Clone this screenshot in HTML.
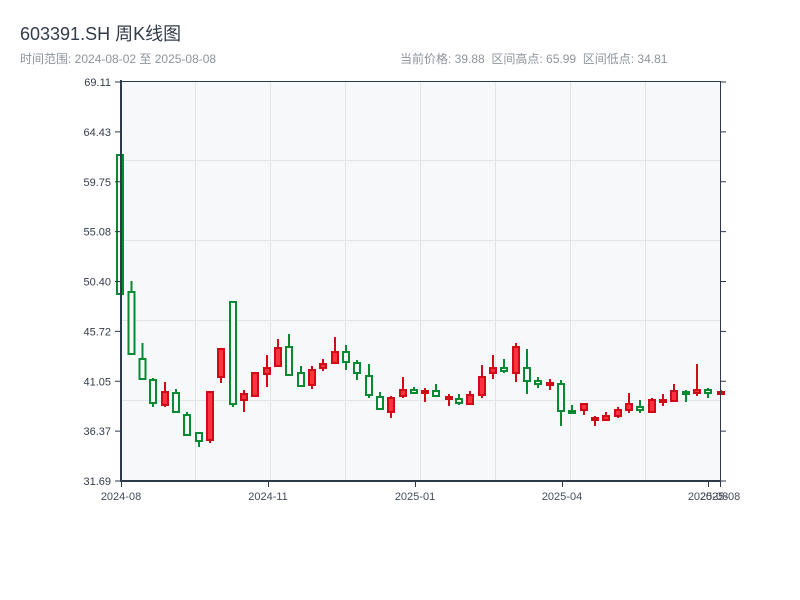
<!DOCTYPE html>
<html><head><meta charset="utf-8"><style>
html,body{margin:0;padding:0;background:#fff;width:800px;height:600px;overflow:hidden}
svg{display:block}
text{font-family:"Liberation Sans","Noto Sans CJK SC",sans-serif;white-space:pre}
</style></head><body>
<svg width="800" height="600" xmlns="http://www.w3.org/2000/svg" xml:space="preserve">
<text x="20" y="40" font-size="18" fill="#333c4a">603391.SH 周K线图</text>
<text x="20" y="63" font-size="12" fill="#8e949c">时间范围: 2024-08-02 至 2025-08-08</text>
<text x="400" y="63" font-size="12" fill="#8e949c">当前价格: 39.88  区间高点: 65.99  区间低点: 34.81</text>
<rect x="121" y="81" width="599" height="400" fill="#f6f8fa"/>
<g stroke="#e1e4e8" stroke-width="1">
<line x1="121" y1="160.5" x2="720" y2="160.5"/><line x1="121" y1="240.5" x2="720" y2="240.5"/><line x1="121" y1="320.5" x2="720" y2="320.5"/><line x1="121" y1="400.5" x2="720" y2="400.5"/>
<line x1="195.5" y1="81" x2="195.5" y2="481"/><line x1="270.5" y1="81" x2="270.5" y2="481"/><line x1="345.5" y1="81" x2="345.5" y2="481"/><line x1="420.5" y1="81" x2="420.5" y2="481"/><line x1="495.5" y1="81" x2="495.5" y2="481"/><line x1="570.5" y1="81" x2="570.5" y2="481"/><line x1="645.5" y1="81" x2="645.5" y2="481"/>
</g>
<g id="c"></g>
<g stroke="#2c3a4b" fill="none">
<line x1="121" y1="81.5" x2="720" y2="81.5" stroke-width="1"/>
<line x1="720.5" y1="81" x2="720.5" y2="481" stroke-width="1"/>
<line x1="121" y1="80" x2="121" y2="482" stroke-width="2"/>
<line x1="120" y1="481" x2="721" y2="481" stroke-width="2"/>
<g stroke-width="1" id="tk"></g>
</g>
<g font-size="11" fill="#333c4a" text-anchor="end" id="yl"></g>
<g font-size="11" fill="#444c58" text-anchor="middle">
<text x="121" y="500">2024-08</text><text x="268" y="500">2024-11</text><text x="415" y="500">2025-01</text><text x="562" y="500">2025-04</text><text x="708" y="500">2025-08</text><text x="720" y="500">2025-08</text>
</g>
<script>
var ns="http://www.w3.org/2000/svg";
function el(p,t,a){var e=document.createElementNS(ns,t);for(var k in a)e.setAttribute(k,a[k]);p.appendChild(e);return e;}
var yl=document.getElementById('yl'),tk=document.getElementById('tk');
var labs=["69.11","64.43","59.75","55.08","50.40","45.72","41.05","36.37","31.69"];
for(var i=0;i<9;i++){var y=82+i*49.875;el(tk,'line',{x1:115,y1:y,x2:121,y2:y});el(tk,'line',{x1:720,y1:y,x2:726,y2:y});var t=el(yl,'text',{x:111,y:y+4});t.textContent=labs[i];}
[121,268,415,562,708,720].forEach(function(x){el(tk,'line',{x1:x+.5,y1:481,x2:x+.5,y2:487});});
var C=[[120,155,294,155,294,0],[131.5,292,354,281,355,0],[142.5,359,379,343,379,0],[153,380,403,378,407,0],[165,392,405,382,407,1],[176,393,412,389,413,0],[187,415,435,412,435,0],[199,433,441,433,447,0],[210,392,440,392,443,1],[221,349,377,349,383,1],[233,302,404,302,407,0],[244,394,400,390,412,1],[255,373,396,373,396,1],[267,368,374,355,387,1],[278,348,366,339,367,1],[289,347,375,334,375,0],[301,373,386,366,386,0],[312,370,385,366,389,1],[323,364,368,359,371,1],[335,352,363,337,363,1],[346,352,362,345,370,0],[357,363,373,360,380,0],[369,376,395,364,398,0],[380,397,409,392,409,0],[391,398,412,396,418,1],[403,390,396,377,398,1],[414,390,393,387,394,0],[425,391,392,388,402,1],[436,391,396,384,396,0],[449,397,399,394,406,1],[459,399,403,394,405,0],[470,395,404,391,404,1],[482,377,395,365,398,1],[493,368,373,355,379,1],[504,368,371,359,373,0],[516,347,373,343,382,1],[527,368,381,349,394,0],[538,381,384,377,388,0],[550,383,384,379,390,1],[561,384,411,380,426,0],[572,411,413,405,414,0],[584,404,410,404,415,1],[595,418,419,416,426,1],[606,416,420,412,420,1],[618,410,416,407,418,1],[629,404,410,393,413,1],[640,407,410,400,413,0],[652,400,412,398,413,1],[663,400,402,394,406,1],[674,391,401,384,401,1],[686,392,393,390,402,0],[697,390,393,364,396,1],[708,390,393,388,398,0],[721,392,393,390,394,1]];
var g=document.getElementById('c');
C.forEach(function(c){var col=c[5]?'#d00a16':'#078a32';
el(g,'line',{x1:c[0],y1:c[3],x2:c[0],y2:c[4],stroke:col,'stroke-width':2});
var h=Math.max(c[2]-c[1],2);
el(g,'rect',{x:c[0]-3,y:c[1],width:6,height:h,fill:c[5]?'#ff3340':'#f6f8fa',stroke:col,'stroke-width':2});});
</script>
</svg>
</body></html>
